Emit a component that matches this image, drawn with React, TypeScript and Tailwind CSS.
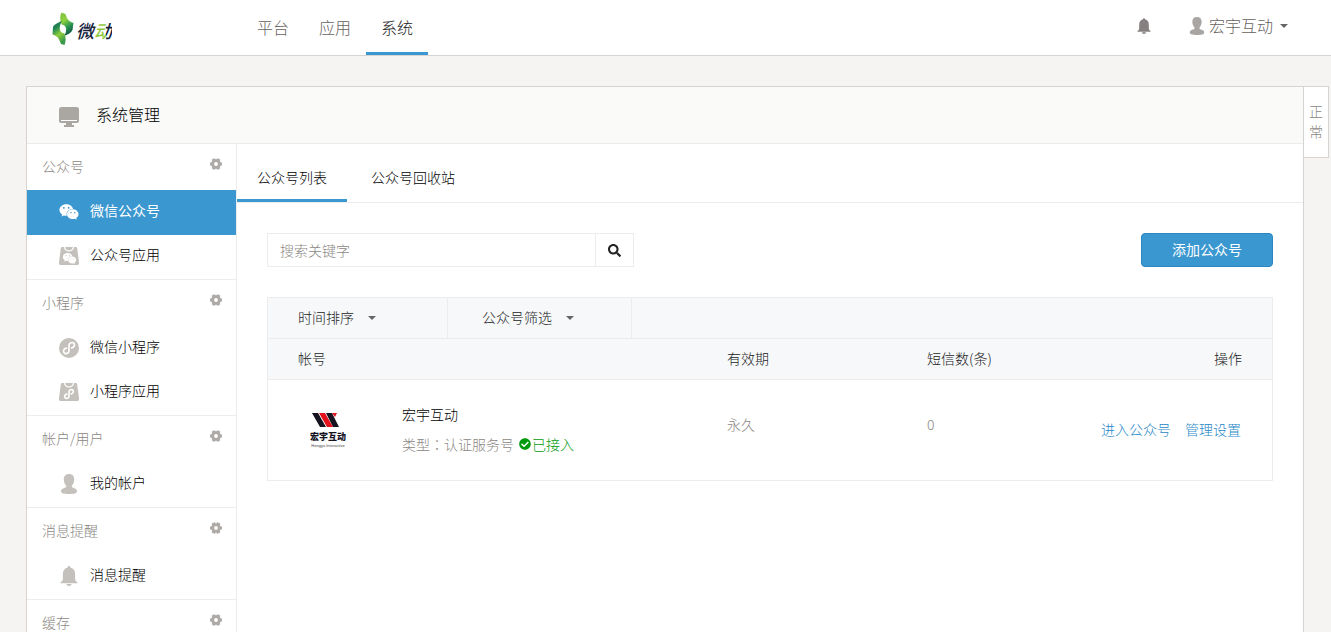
import { useState } from 'react'
import { FaCheckCircle, FaSearch, FaWeixin } from 'react-icons/fa'

type IconProps = { className?: string }

function BellIcon({ className }: IconProps) {
  return (
    <svg viewBox="0 0 16 18" fill="currentColor" className={className} aria-hidden="true">
      <path d="M8 0c.8 0 1.2.6 1.2 1.3C11.800 1.900 13.500 4 13.500 7v4.500c0 1.400.6 2.300 1.900 3.100.5.4.3.9-.3.9H.9c-.6 0-.8-.5-.3-.9 1.300-.8 1.900-1.700 1.900-3.100V7c0-3 1.700-5.100 4.300-5.700C6.800.6 7.200 0 8 0Z" />
      <path d="M5.600 16.200h4.800C10.200 17.400 9.200 18 8 18s-2.200-.6-2.400-1.800Z" />
    </svg>
  )
}

function UserIcon({ className }: IconProps) {
  return (
    <svg viewBox="0 0 16 20" fill="currentColor" className={className} aria-hidden="true">
      <path d="M8 0c3.400 0 5.200 2.200 5.200 5.400 0 2.700-1 4.800-2.400 6.200v1.200c.2.700 1.200 1 2.400 1.400 2 .7 2.800 1.400 2.800 3.100 0 2.100-3 2.700-8 2.700s-8-.6-8-2.700c0-1.700.8-2.400 2.800-3.100 1.200-.4 2.200-.7 2.400-1.400v-1.200C3.800 10.200 2.800 8.100 2.800 5.400 2.800 2.200 4.600 0 8 0Z" />
    </svg>
  )
}

function MonitorIcon({ className }: IconProps) {
  return (
    <svg viewBox="0 0 20 20" className={className} aria-hidden="true">
      <rect width="20" height="16" rx="2.500" fill="currentColor" />
      <rect x="2" y="13" width="16" height="1" fill="#fff" />
      <path d="M7 16h6v2h2v2H5v-2h2z" fill="currentColor" />
    </svg>
  )
}

function GearIcon({ className }: IconProps) {
  return (
    <svg viewBox="0 0 12 12" className={className} aria-hidden="true">
      <g fill="currentColor">
        <circle cx="6" cy="6" r="4.800" />
        <rect x="0" y="4.200" width="12" height="3.600" rx="1" />
        <rect x="0" y="4.200" width="12" height="3.600" rx="1" transform="rotate(60 6 6)" />
        <rect x="0" y="4.200" width="12" height="3.600" rx="1" transform="rotate(120 6 6)" />
      </g>
      <circle cx="6" cy="6" r="1.900" fill="#fff" />
    </svg>
  )
}

const swirl =
  'M7.300 10.200C4.900 10.600 3.800 13 5 14.600c1.400 1.700 5 .9 5-1.700V7.200c0-2.600 3.600-3.500 5-1.800 1.200 1.600.1 4-2.300 4.400'

function MiniProgramIcon({ className }: IconProps) {
  return (
    <svg viewBox="0 0 20 20" className={className} aria-hidden="true">
      <circle cx="10" cy="10" r="10" fill="currentColor" />
      <path d={swirl} fill="none" stroke="#fff" strokeWidth="1.700" strokeLinecap="round" />
    </svg>
  )
}

function Bag() {
  return (
    <>
      <path
        d="M3.500 1h13c1 0 1.500.5 1.700 1.400L20 16.500c.2 1.600-.5 2.500-2 2.500H2c-1.500 0-2.200-.9-2-2.500L1.800 2.400C2 1.500 2.500 1 3.500 1Z"
        fill="currentColor"
      />
      <path d="M5.500 1c.4 2.600 2 3.900 4.500 3.900S14.100 3.600 14.500 1" fill="none" stroke="#fff" strokeWidth="1.300" />
    </>
  )
}

function WechatBagIcon({ className }: IconProps) {
  return (
    <svg viewBox="0 0 20 20" className={className} aria-hidden="true">
      <Bag />
      <FaWeixin x="3.500" y="5.500" width="13" height="13" color="#fff" />
    </svg>
  )
}

function MiniBagIcon({ className }: IconProps) {
  return (
    <svg viewBox="0 0 20 20" className={className} aria-hidden="true">
      <Bag />
      <path
        d={swirl}
        transform="translate(2 4) scale(.8)"
        fill="none"
        stroke="#fff"
        strokeWidth="2"
        strokeLinecap="round"
      />
    </svg>
  )
}

function Caret() {
  return <span className="border-x-4 border-t-4 border-x-transparent border-t-[#666]" />
}

function Logo() {
  return (
    <svg viewBox="0 0 60 34" className="h-[34px] w-[60px]" role="img" aria-label="微动">
      <defs>
        <linearGradient id="leaf" x1="0" y1="0" x2="0.400" y2="1">
          <stop offset="0" stopColor="#7cc142" />
          <stop offset="0.400" stopColor="#8fd03f" />
          <stop offset="0.700" stopColor="#2f9a50" />
          <stop offset="1" stopColor="#125c46" />
        </linearGradient>
        <linearGradient id="leaf-back" x1="0" y1="0" x2="0.400" y2="1">
          <stop offset="0" stopColor="#14604a" />
          <stop offset="0.350" stopColor="#258a55" />
          <stop offset="0.650" stopColor="#8fce3c" />
          <stop offset="1" stopColor="#3c9a4a" />
        </linearGradient>
        <linearGradient id="ink" x1="0" y1="0" x2="1" y2="0">
          <stop offset="0.500" stopColor="#16203a" />
          <stop offset="0.520" stopColor="#8dc63f" />
          <stop offset="0.780" stopColor="#8dc63f" />
          <stop offset="0.800" stopColor="#16203a" />
        </linearGradient>
      </defs>
      <path d="M9.500.500C7.500 4 8 8.500 9.500 12.500 13 13 14.500 15.500 14 19c-.3 2-1 3.500-2 5 4-1.500 7.500-3.500 8.500-6L21.500 11c-3-1-5.500-2.500-6.500-5L13.500 2Z" fill="url(#leaf)" />
      <path d="M10 9C6 10.500 2 12.500 1 15L.500 22.500c3 1 5.500 2.500 6.500 5l2 4.500 3.500 1c1.500-3.500 1.500-7.500 0-11.500C9 21 7.500 19 7.800 15.500c.2-2.500 1-4.500 2.200-6.500Z" fill="url(#leaf-back)" />
      <text
        x="24"
        y="26"
        fontSize="18"
        fontWeight="500"
        fontStyle="italic"
        fontFamily="'Noto Sans CJK SC', sans-serif"
        fill="url(#ink)"
      >
        微动
      </text>
    </svg>
  )
}

function AccountLogo() {
  return (
    <svg viewBox="0 0 60 60" className="size-[60px]" role="img" aria-label="宏宇互动 Hongyu Interactive">
      <path d="M14 13h6l8 14h-6z M28 13h6l7 14h-6z" fill="#15131f" />
      <path d="M21 13h6l8 14h-6z M34 13h5l-2 4z" fill="#e2121c" />
      <text x="30" y="40" textAnchor="middle" fontSize="9" fontWeight="900" fontFamily="'Noto Sans CJK SC', sans-serif" fill="#15131f">
        宏宇互动
      </text>
      <text x="30" y="47" textAnchor="middle" fontSize="4" fontFamily="'Liberation Sans', sans-serif" fill="#444">
        Hongyu Interactive
      </text>
    </svg>
  )
}

const navItems = ['平台', '应用', '系统']

const menu = [
  {
    title: '公众号',
    items: [
      { name: '微信公众号', Icon: FaWeixin },
      { name: '公众号应用', Icon: WechatBagIcon },
    ],
  },
  {
    title: '小程序',
    items: [
      { name: '微信小程序', Icon: MiniProgramIcon },
      { name: '小程序应用', Icon: MiniBagIcon },
    ],
  },
  { title: '帐户/用户', items: [{ name: '我的帐户', Icon: UserIcon }] },
  { title: '消息提醒', items: [{ name: '消息提醒', Icon: BellIcon }] },
  { title: '缓存', items: [] },
]

function Header() {
  return (
    <header className="flex h-14 shrink-0 items-stretch border-b border-[#d6d3d1] bg-white pl-[52px] pr-[43px]">
      <a href="#" className="flex items-center pt-[2px]">
        <Logo />
      </a>
      <nav className="ml-[130px] flex text-base text-[#666260]">
        {navItems.map((name) => (
          <a
            key={name}
            href="#"
            className={
              name === '系统'
                ? 'flex items-center border-b-3 border-[#3b97d3] px-[15px] pt-[1px] text-[#222]'
                : 'flex items-center px-[15px] pb-[2px]'
            }
          >
            {name}
          </a>
        ))}
      </nav>
      <div className="ml-auto flex items-center pb-[6px] text-[#666260]">
        <button type="button" aria-label="消息">
          <BellIcon className="mt-[3px] h-4 w-[14px] text-[#858180]" />
        </button>
        <button type="button" className="ml-[38px] flex items-center text-base">
          <UserIcon className="mr-1 mt-[2px] h-[18px] w-4 text-[#a9a5a2]" />
          宏宇互动
          <span className="ml-[7px] mt-[2px] flex">
            <Caret />
          </span>
        </button>
      </div>
    </header>
  )
}

function Sidebar({ active, onSelect }: { active: string; onSelect: (key: string) => void }) {
  return (
    <aside className="w-[210px] shrink-0 border-r border-[#ececec]">
      {menu.map((group) => (
        <section key={group.title} className="border-b border-[#ececec]">
          <div className="flex h-[46px] items-center justify-between pb-[2px] pl-[15px] pr-[14px] text-[#8b8784]">
            <h3>{group.title}</h3>
            <button type="button" className="mb-[5px]" aria-label={`${group.title}设置`}>
              <GearIcon className="size-3 text-[#aeaaa7]" />
            </button>
          </div>
          {group.items.map(({ name, Icon }) => {
            const key = `${group.title}-${name}`
            const isActive = key === active
            return (
              <a
                key={key}
                href="#"
                onClick={() => onSelect(key)}
                className={`flex h-[44px] items-center gap-[11px] pb-[2px] pl-8 first-of-type:h-[45px] ${
                  isActive ? 'bg-[#3b97d0] font-normal text-white' : 'text-black'
                }`}
              >
                <Icon className={`h-5 w-5 shrink-0 ${isActive ? 'text-white' : 'text-[#c4c0bb]'}`} />
                <span className="pb-1">{name}</span>
              </a>
            )
          })}
        </section>
      ))}
    </aside>
  )
}

function AccountTable() {
  return (
    <div className="mt-[30px] border border-[#ececec]">
      <div className="flex h-[41px] border-b border-[#ececec] bg-[#f6f8fa] text-[#222]">
        <button type="button" className="flex w-[180px] items-center gap-[14px] border-r border-[#ececec] pl-[30px]">
          <span className="pb-[2px]">时间排序</span>
          <Caret />
        </button>
        <button type="button" className="flex w-[184px] items-center gap-[14px] border-r border-[#ececec] pl-[34px]">
          <span className="pb-[2px]">公众号筛选</span>
          <Caret />
        </button>
      </div>
      <table className="w-full table-fixed text-left">
        <colgroup>
          <col />
          <col className="w-[200px]" />
          <col className="w-[130px]" />
          <col className="w-[215px]" />
        </colgroup>
        <thead>
          <tr className="h-[40px] border-b border-[#ececec] bg-[#f6f8fa] text-[#222]">
            <th className="pb-[2px] pl-[30px] font-light">帐号</th>
            <th className="pb-[2px] font-light">有效期</th>
            <th className="pb-[2px] font-light">短信数(条)</th>
            <th className="pb-[2px] pr-[30px] text-right font-light">操作</th>
          </tr>
        </thead>
        <tbody>
          <tr className="h-[101px]">
            <td className="pl-[30px]">
              <div className="flex items-center">
                <AccountLogo />
                <div className="ml-[44px] pb-[2px] leading-[30px]">
                  <p className="text-black">宏宇互动</p>
                  <p className="flex items-center text-[#8b8784]">
                    <span>
                      类型<span className="font-['Noto_Sans_CJK_TC',sans-serif]">：</span>认证服务号
                    </span>
                    <span className="ml-[5px] flex items-center gap-[1px] text-[#009a0c]">
                      <FaCheckCircle className="size-3" />
                      已接入
                    </span>
                  </p>
                </div>
              </div>
            </td>
            <td className="pb-3 text-[#8b8784]">永久</td>
            <td className="pb-3 text-[#8b8784]">0</td>
            <td className="pb-[2px] pr-[31px] text-right text-[#1f87c7]">
              <a href="#">进入公众号</a>
              <a href="#" className="ml-[14px]">
                管理设置
              </a>
            </td>
          </tr>
        </tbody>
      </table>
    </div>
  )
}

export default function App() {
  const [active, setActive] = useState('公众号-微信公众号')

  return (
    <div className="flex h-screen flex-col overflow-hidden bg-[#f5f4f3] font-['Noto_Sans_CJK_SC',sans-serif] text-sm font-light">
      <Header />
      <div className="flex min-h-0 flex-1 items-start pl-[26px] pr-[2px] pt-[30px]">
        <div className="min-h-screen min-w-0 flex-1 border border-[#d6d3d1] bg-white">
          <div className="flex h-[57px] items-center border-b border-[#ececec] bg-[#fafaf8] pl-8 text-base text-black">
            <MonitorIcon className="mt-1 size-5 text-[#aaa6a1]" />
            <h2 className="ml-[17px] pb-[2px]">系统管理</h2>
          </div>
          <div className="flex min-h-screen">
            <Sidebar active={active} onSelect={setActive} />
            <main className="min-w-0 flex-1">
              <nav className="flex h-[59px] gap-1 border-b border-[#ececec] text-black">
                <a href="#" className="flex items-center border-b-3 border-[#3b97d0] px-5 pt-[10px]">
                  公众号列表
                </a>
                <a href="#" className="flex items-center px-5 pt-[7px]">
                  公众号回收站
                </a>
              </nav>
              <div className="p-[30px]">
                <div className="flex justify-between">
                  <form className="flex h-[34px] w-[367px] border border-[#ececec]" onSubmit={(e) => e.preventDefault()}>
                    <input
                      type="text"
                      aria-label="搜索关键字"
                      placeholder="搜索关键字"
                      className="min-w-0 flex-1 px-3 outline-none placeholder:text-[#8b8784]"
                    />
                    <button
                      type="submit"
                      aria-label="搜索"
                      className="flex w-[38px] items-center justify-center border-l border-[#ececec] text-[#222]"
                    >
                      <FaSearch className="size-[13px]" />
                    </button>
                  </form>
                  <button
                    type="button"
                    className="h-[34px] w-[132px] rounded border border-[#2a85c0] bg-[#3b97d0] pb-[2px] font-normal text-white"
                  >
                    添加公众号
                  </button>
                </div>
                <AccountTable />
              </div>
            </main>
          </div>
        </div>
        <div className="flex h-[72px] w-[25px] items-center justify-center border-y border-r border-[#d6d3d1] bg-white px-[5px] pb-[2px] text-center leading-5 text-[#8b8784]">
          正常
        </div>
      </div>
    </div>
  )
}
